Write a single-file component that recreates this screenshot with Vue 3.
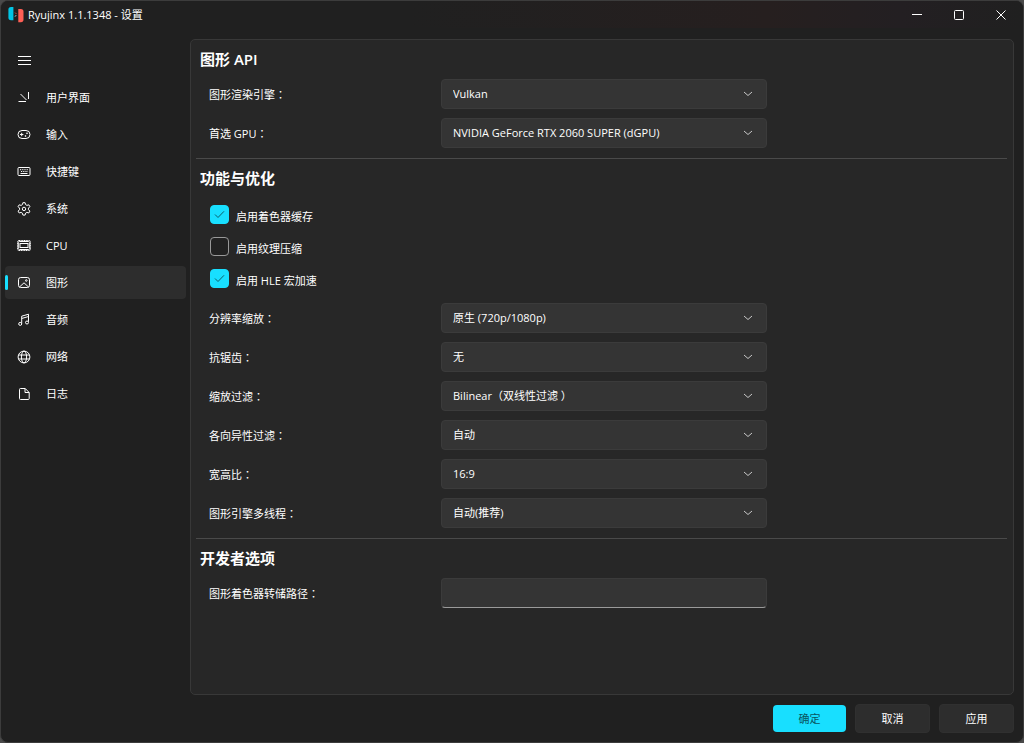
<script setup>
import { ref } from 'vue'

const pages = [
  { id: 'ui', label: '用户界面' },
  { id: 'input', label: '输入' },
  { id: 'hotkeys', label: '快捷键' },
  { id: 'system', label: '系统' },
  { id: 'cpu', label: 'CPU' },
  { id: 'graphics', label: '图形' },
  { id: 'audio', label: '音频' },
  { id: 'network', label: '网络' },
  { id: 'log', label: '日志' }
]
const current = ref('graphics')

const apiRows = ref([
  { id: 'backend', label: '图形渲染引擎', value: 'Vulkan' },
  { id: 'gpu', label: '首选 GPU', value: 'NVIDIA GeForce RTX 2060 SUPER (dGPU)' }
])
const toggles = ref([
  { id: 'shader-cache', label: '启用着色器缓存', on: true },
  { id: 'texture-compression', label: '启用纹理压缩', on: false },
  { id: 'macro-hle', label: '启用 HLE 宏加速', on: true }
])
const featureRows = ref([
  { id: 'resolution', label: '分辨率缩放', value: '原生 (720p/1080p)' },
  { id: 'aa', label: '抗锯齿', value: '无' },
  { id: 'filter', label: '缩放过滤', value: 'Bilinear（双线性过滤 ）' },
  { id: 'anisotropy', label: '各向异性过滤', value: '自动' },
  { id: 'aspect', label: '宽高比', value: '16:9' },
  { id: 'threading', label: '图形引擎多线程', value: '自动(推荐)' }
])
const dumpPath = ref('')
</script>

<template>
  <div class="window">
    <header class="titlebar">
      <svg class="logo" width="16" height="16" viewBox="0 0 16 16" aria-hidden="true">
        <path d="M5.400 0v13.200H3A2.600 2.600 0 0 1 .4 10.600V2.600A2.600 2.600 0 0 1 3 0z" fill="#02c5e5" />
        <path d="M10.300 2H12.900A2.600 2.600 0 0 1 15.500 4.600V12.600A2.600 2.600 0 0 1 12.900 15.200H10.300z" fill="#ff5f55" />
        <path d="M6.500 9.500 8 8" stroke="#02a5c2" fill="none" />
        <path d="M7 5.500 8.500 7M7.300 9.800 8.600 8.300" stroke="#c04f49" fill="none" />
      </svg>
      <h1>Ryujinx 1.1.1348 - 设置</h1>
      <div class="captions">
        <button type="button" aria-label="最小化"><svg width="12" height="12" viewBox="0 0 12 12"><path d="M1 5.500h10" /></svg></button>
        <button type="button" aria-label="最大化"><svg width="12" height="12" viewBox="0 0 12 12"><rect x="1.500" y="1.500" width="9" height="9" rx="1" /></svg></button>
        <button type="button" aria-label="关闭"><svg width="12" height="12" viewBox="0 0 12 12"><path d="M1.500 1.500l9 9M10.500 1.500l-9 9" /></svg></button>
      </div>
    </header>

    <div class="body">
      <nav class="sidebar">
        <button type="button" class="item" aria-label="菜单">
          <svg class="icon" viewBox="0 0 14 14"><path d="M1 2.500h13M1 6.500h13M1 10.500h13" /></svg>
        </button>
        <button
          v-for="p in pages"
          :key="p.id"
          type="button"
          class="item"
          :class="{ active: p.id === current }"
          @click="current = p.id"
        >
          <svg class="icon" viewBox="0 0 14 14" aria-hidden="true">
            <template v-if="p.id === 'ui'"><path d="M1.500 10.500h7.500M11.500 1v7M3.500 3l6 6" /></template>
            <template v-else-if="p.id === 'input'"><rect x="1" y="2.500" width="12" height="8" rx="4" /><path d="M3 6.500h3.400M4.700 4.800v3.400" /><circle cx="8.500" cy="8" r=".5" /><circle cx="10" cy="5.300" r=".5" /></template>
            <template v-else-if="p.id === 'hotkeys'"><rect x="1" y="2.500" width="12" height="8" rx="1" /><path d="M3.500 8.500h7" /><path d="M3 4.700h8M4 6.500h7" stroke-dasharray="1.200 1" /></template>
            <template v-else-if="p.id === 'system'"><path d="M5.900.7h2.200l.5 1.900 1.300.8 1.900-.6 1.100 1.900-1.400 1.400v1.600l1.400 1.400-1.100 1.900-1.900-.6-1.300.8-.5 1.900H5.900l-.5-1.900-1.300-.8-1.900.6-1.100-1.900 1.400-1.400V6.100L1.100 4.700l1.100-1.900 1.900.6 1.300-.8z" /><circle cx="7" cy="6.900" r="1.700" /></template>
            <template v-else-if="p.id === 'cpu'"><rect x=".3" y="1.500" width="13.400" height="10" rx="1.500" stroke-dasharray="1.200 .5" /><rect x="1.300" y="2.500" width="11.400" height="8" rx="1" /><rect x="3" y="4.500" width="8" height="4" /></template>
            <template v-else-if="p.id === 'graphics'"><rect x="1.500" y="1.500" width="11" height="10" rx="2.200" /><path d="M2.500 11 7 6.800l4.500 4.200" /><circle cx="9.300" cy="4.500" r=".8" /></template>
            <template v-else-if="p.id === 'audio'"><path d="M4.700 10.500V3.200l6.800-2v7.600M4.700 5.500l6.800-2" /><circle cx="3.200" cy="10.900" r="1.500" /><circle cx="10" cy="9.500" r="1.500" /></template>
            <template v-else-if="p.id === 'network'"><circle cx="7" cy="7" r="5.900" /><ellipse cx="7" cy="7" rx="2.600" ry="5.900" /><path d="M1.500 5h11M1.500 9h11" /></template>
            <template v-else><path d="M3.500 1.500h4.700l4 4v6a1 1 0 0 1-1 1H3.500a1 1 0 0 1-1-1v-9a1 1 0 0 1 1-1zM8 1.500v4h4" /></template>
          </svg>
          <span>{{ p.label }}</span>
        </button>
      </nav>

      <main class="panel">
        <section>
          <h2>图形 API</h2>
          <div class="rows">
            <div v-for="r in apiRows" :key="r.id" class="row">
              <label :for="r.id">{{ r.label }}<span class="colon">：</span></label>
              <div class="combo">
                <select :id="r.id" v-model="r.value"><option>{{ r.value }}</option></select>
                <svg width="10" height="6" viewBox="0 0 10 6" aria-hidden="true"><path d="M1 1l4 3.500L9 1" /></svg>
              </div>
            </div>
          </div>
        </section>

        <section>
          <h2>功能与优化</h2>
          <div class="toggles">
            <label v-for="t in toggles" :key="t.id" class="toggle">
              <span class="box">
                <input v-model="t.on" type="checkbox" />
                <svg v-if="t.on" width="11" height="9" viewBox="0 0 11 9" aria-hidden="true"><path d="M1 4.500l3 3L10 1.300" /></svg>
              </span>
              <span class="caption">{{ t.label }}</span>
            </label>
          </div>
          <div class="rows">
            <div v-for="r in featureRows" :key="r.id" class="row">
              <label :for="r.id">{{ r.label }}<span class="colon">：</span></label>
              <div class="combo">
                <select :id="r.id" v-model="r.value"><option>{{ r.value }}</option></select>
                <svg width="10" height="6" viewBox="0 0 10 6" aria-hidden="true"><path d="M1 1l4 3.500L9 1" /></svg>
              </div>
            </div>
          </div>
        </section>

        <section>
          <h2>开发者选项</h2>
          <div class="rows">
            <div class="row">
              <label for="dump">图形着色器转储路径<span class="colon">：</span></label>
              <input id="dump" v-model="dumpPath" class="textbox" type="text" />
            </div>
          </div>
        </section>
      </main>
    </div>

    <footer class="actions">
      <button type="button" class="primary">确定</button>
      <button type="button">取消</button>
      <button type="button">应用</button>
    </footer>
  </div>
</template>

<style>
body {
  background: #4a4a4a;
}
</style>

<style scoped>
.window {
  box-sizing: border-box;
  min-height: 100vh;
  display: flex;
  flex-direction: column;
  border: 1px solid #3c3c3c;
  border-radius: 8px;
  background: #202020;
  color: #fff;
  font-family: "Open Sans", "Noto Sans CJK SC", sans-serif;
  font-size: 11px;
  line-height: 16px;
  overflow: hidden;
}
.window * {
  box-sizing: border-box;
}
button,
select,
input {
  margin: 0;
  font: inherit;
  color: inherit;
}
svg {
  fill: none;
  stroke: currentColor;
}
.titlebar {
  display: flex;
  align-items: center;
  height: 27px;
  padding: 0 1px 0 7px;
  background: linear-gradient(90deg, #202020 40%, #261f1f 75%, #231f22 88%, #202020);
}
.logo {
  stroke: none;
}
h1 {
  margin: 0 0 0 4px;
  font-size: 11px;
  font-weight: 400;
}
.captions {
  display: flex;
  margin-left: auto;
}
.captions button {
  display: grid;
  place-items: center;
  width: 42px;
  height: 26px;
  padding: 0;
  border: 0;
  background: none;
}
.body {
  flex: 1;
  display: flex;
  padding: 11px 9px 0 4px;
}
.sidebar {
  flex: none;
  display: flex;
  flex-direction: column;
  gap: 4px;
  width: 181px;
  margin-right: 4px;
  padding-top: 5px;
}
.item {
  position: relative;
  display: flex;
  align-items: center;
  gap: 15px;
  height: 33px;
  padding: 0 12px;
  border: 0;
  border-radius: 4px;
  background: none;
  text-align: left;
}
.item.active {
  background: #2d2d2d;
}
.item.active::before {
  content: "";
  position: absolute;
  left: 0;
  top: 9px;
  width: 3px;
  height: 15px;
  border-radius: 2px;
  background: #18dfff;
}
.icon {
  flex: none;
  width: 14px;
  height: 14px;
}
.panel {
  flex: 1;
  border: 1px solid #383838;
  border-radius: 5px;
  background: #272727;
  padding: 0 6px 0 5px;
}
section {
  padding: 9px 4px 10px;
}
section + section {
  border-top: 1px solid #4a4a4a;
}
h2 {
  margin: 0;
  font-size: 15px;
  line-height: 20px;
  font-weight: 600;
}
.rows {
  display: grid;
  gap: 9px;
  margin-top: 10px;
  padding-left: 9px;
}
.row {
  display: grid;
  grid-template-columns: 232px 326px;
  align-items: center;
}
.colon {
  font-family: "Noto Sans CJK TC", sans-serif;
}
.combo {
  position: relative;
}
.combo select,
.textbox {
  display: block;
  width: 100%;
  height: 30px;
  padding: 0 30px 0 11px;
  appearance: none;
  border: 1px solid #3b3b3b;
  border-radius: 4px;
  background: #343434;
  outline: 0;
}
.combo svg {
  position: absolute;
  right: 14px;
  top: 12px;
  color: #c8c8c8;
  pointer-events: none;
}
.textbox {
  border-bottom-color: #9a9a9a;
}
.toggles {
  display: grid;
  justify-content: start;
  gap: 13px;
  margin-top: 17px;
  padding-left: 10px;
}
.toggle {
  display: flex;
  gap: 7px;
  height: 19px;
}
.box {
  display: grid;
  place-items: center;
}
.box > * {
  grid-area: 1 / 1;
}
.box input {
  width: 19px;
  height: 19px;
  appearance: none;
  border: 1px solid #999;
  border-radius: 4px;
  background: #222;
}
.box input:checked {
  border-color: #18dfff;
  background: #18dfff;
}
.box svg {
  color: #0b5f6c;
  z-index: 1;
  pointer-events: none;
}
.caption {
  padding-top: 4px;
}
.toggles + .rows {
  margin-top: 15px;
}
.actions {
  display: flex;
  justify-content: flex-end;
  align-items: center;
  gap: 9px;
  padding: 9px 9px;
}
.actions button {
  width: 75px;
  height: 29px;
  padding: 0;
  border: 1px solid #303030;
  border-radius: 4px;
  background: #2d2d2d;
}
.actions .primary {
  width: 73px;
  height: 27px;
  border: 0;
  background: #18dfff;
  color: #08555f;
}
</style>
